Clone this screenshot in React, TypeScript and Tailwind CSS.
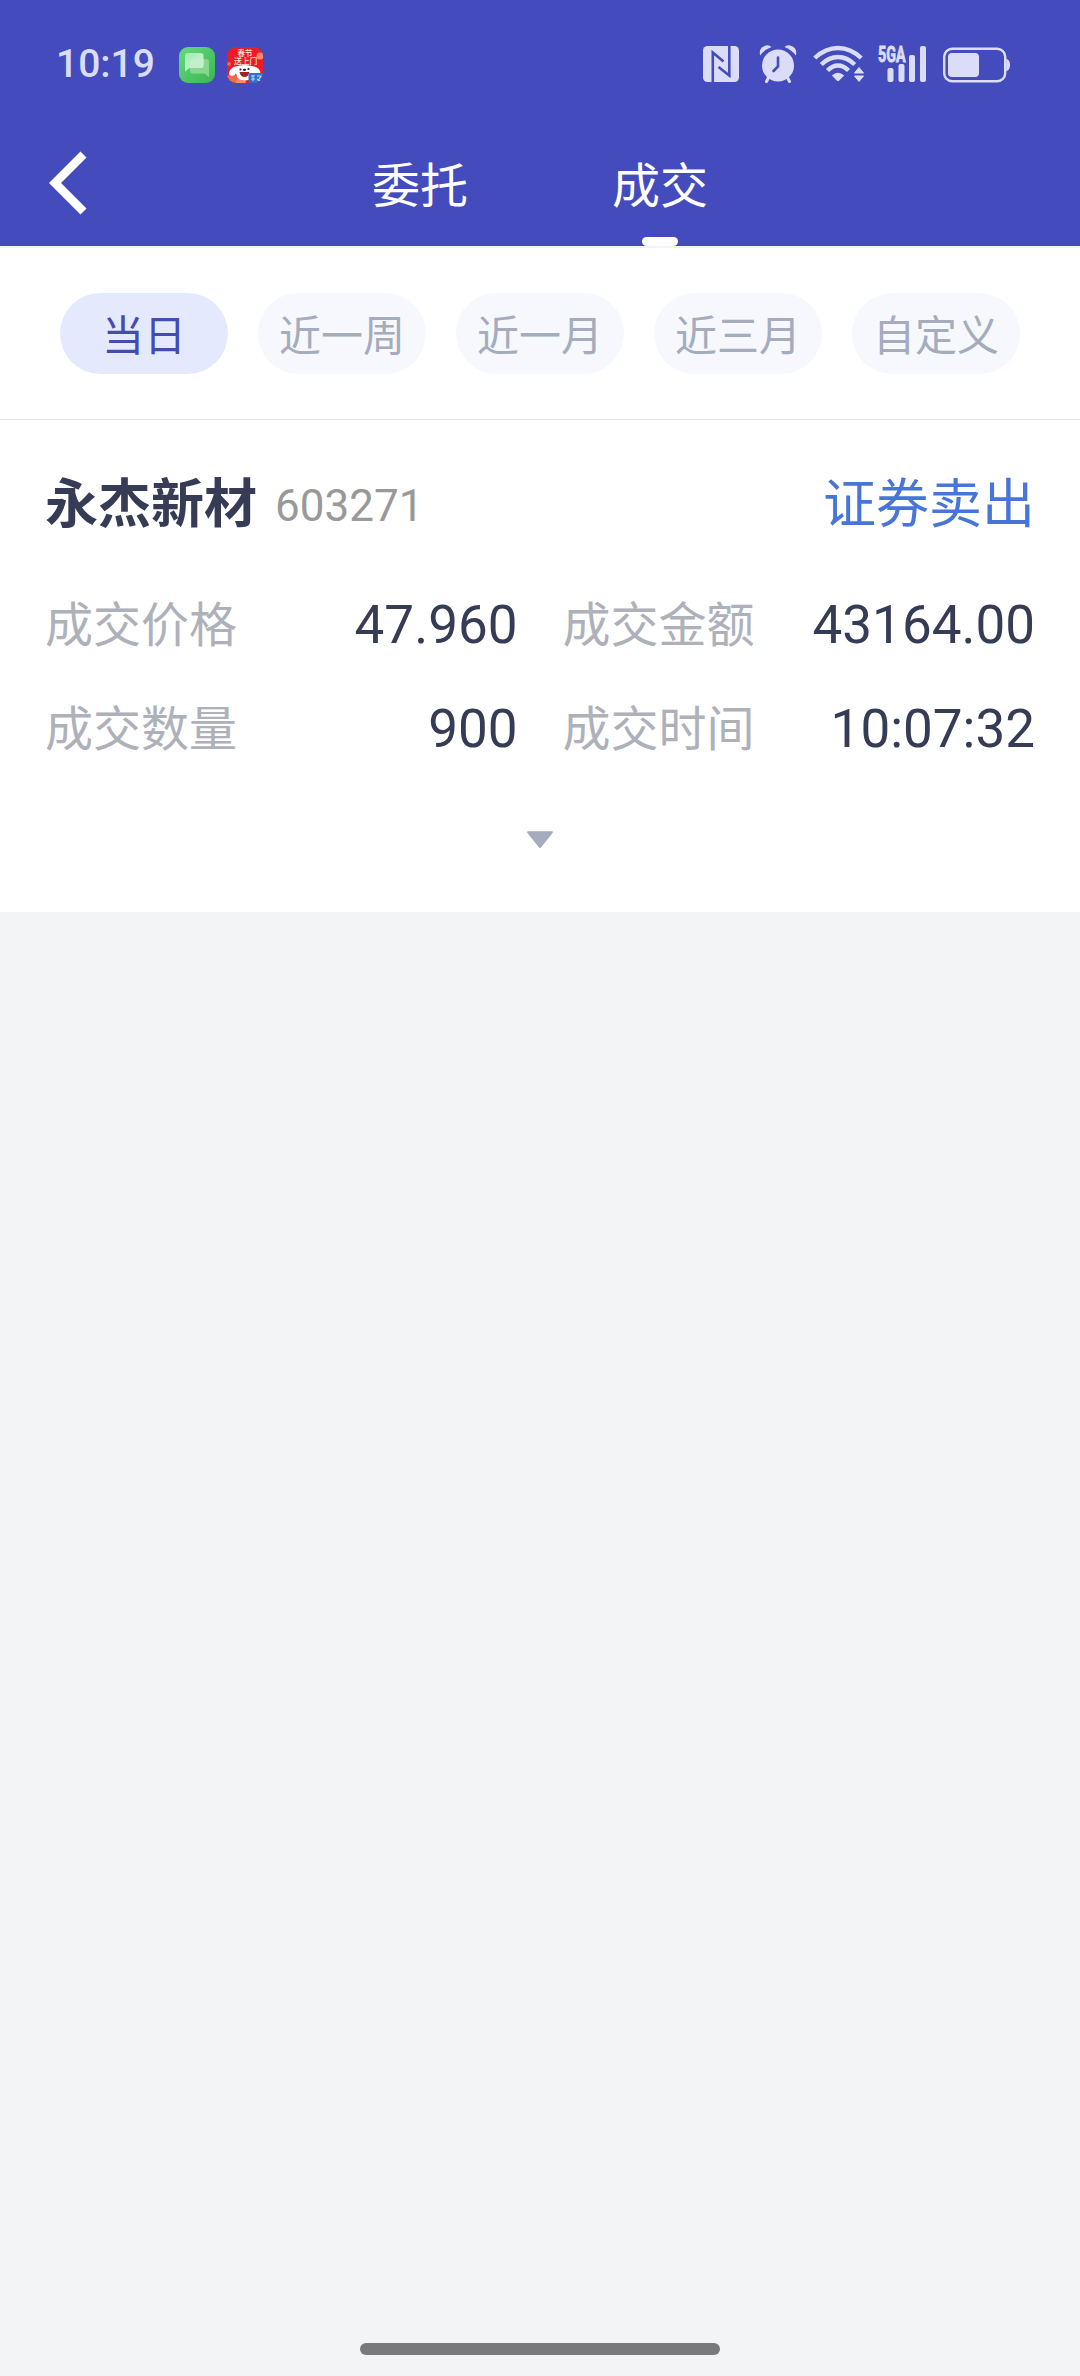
import React from "react";

const INK = "#DBDDF8";

function ChatAppIcon() {
  return (
    <svg width="36" height="36" viewBox="0 0 36 36">
      <defs>
        <linearGradient id="chatBg" x1="0" y1="0" x2="1" y2="1">
          <stop offset="0" stopColor="#62DB7F" />
          <stop offset="1" stopColor="#3DB551" />
        </linearGradient>
        <linearGradient id="bubble" x1="0" y1="0" x2="1" y2="1">
          <stop offset="0" stopColor="#A2EAB2" />
          <stop offset="1" stopColor="#D2F5D8" />
        </linearGradient>
      </defs>
      <rect width="36" height="36" rx="9" fill="url(#chatBg)" />
      <path d="M14 12h13q3 0 3 3v15l-4.500-3.500H14q-3 0-3-3V15q0-3 3-3z" fill="#85D88F" />
      <path d="M9 6h12.500q3 0 3 3v9q0 3-3 3H10.500L6 24.500V9q0-3 3-3z" fill="url(#bubble)" />
      <path d="M14 12h10.500v6q0 3-3 3H11.500V15q0-3 2.500-3z" fill="#C3EFCB" />
    </svg>
  );
}

function FestivalAppIcon() {
  return (
    <svg width="36" height="36" viewBox="0 0 36 36">
      <defs>
        <clipPath id="festClip">
          <rect width="36" height="36" rx="9" />
        </clipPath>
      </defs>
      <g clipPath="url(#festClip)">
        <rect width="36" height="36" fill="#EC1B24" />
        <circle cx="33" cy="9" r="3.500" fill="#F98A72" />
        <circle cx="2" cy="17" r="2" fill="#F5604F" />
        <circle cx="5" cy="34" r="7" fill="#F26A4A" />
        <circle cx="14" cy="36" r="5" fill="#F58B6D" />
        <g fill="#FFE9E2" fontFamily="'Noto Sans CJK SC', sans-serif" fontWeight="500">
          <text x="10.500" y="9" fontSize="7.500">春节</text>
          <text x="7" y="17.200" fontSize="7.800">送上门</text>
        </g>
        <path d="M8 19.500q10-3 19 0 6 1 7 8-5 3-7-1-1 7-9 7-8 0-9-7-3 4-7 1 0-6 6-8z" fill="#fff" />
        <circle cx="13.500" cy="22.500" r="1.100" fill="#222" />
        <circle cx="21.500" cy="22" r="1.100" fill="#222" />
        <ellipse cx="17.500" cy="22.800" rx="1.800" ry="1.100" fill="#222" />
        <path d="M12.500 25h10q-1 5-5 5t-5-5z" fill="#9C2228" />
        <rect x="21.500" y="26" width="15" height="10" rx="2" fill="#2E72D2" />
        <path d="M24 29h4M24 32h4M26 28v6M30 29h4l-3 5M30 32l3 2" stroke="#BBD8FA" strokeWidth="1.100" fill="none" />
      </g>
    </svg>
  );
}

function NfcIcon() {
  return (
    <svg width="36" height="36" viewBox="0 0 36 36">
      <rect width="36" height="36" rx="4.500" fill={INK} />
      <g fill="none" stroke="#444CBD" strokeWidth="2.600">
        <path d="M9.800 36V6.500L20.500 15.500" />
        <path d="M26.300 0V29.500L15.500 21" />
      </g>
    </svg>
  );
}

function AlarmIcon() {
  return (
    <svg width="38" height="38" viewBox="0 0 38 38">
      <g fill={INK}>
        <circle cx="19" cy="20.500" r="16" />
        <path d="M1.200 10.500Q-.5 4 4.500 1.500T12.500 2Q5.500 4.500 1.200 10.500z" />
        <path d="M36.800 10.500Q38.500 4 33.500 1.500T25.500 2Q32.500 4.500 36.800 10.500z" />
      </g>
      <path d="M9.500 32.500L7.500 36.500M28.500 32.500L30.500 36.500" stroke={INK} strokeWidth="3" strokeLinecap="round" />
      <path d="M19 12.500V21.500L14.500 26" fill="none" stroke="#444CBD" strokeWidth="2.600" strokeLinecap="round" />
    </svg>
  );
}

function WifiIcon() {
  return (
    <svg width="52" height="38" viewBox="0 0 52 38">
      <g fill="none" stroke={INK} strokeWidth="4.400">
        <path d="M1.800 13Q12.500 3 25 3T48.200 13" />
        <path d="M8.300 19.500Q16 12 25 12T41.700 19.500" />
        <path d="M14.500 25.500Q19.500 20.500 25 20.500T35.500 25.500" />
      </g>
      <path d="M18.800 30.500Q25 25 31.200 30.500L26 35.800Q25 36.700 24 35.800z" fill={INK} />
      <path d="M41.500 28L46 22.500 50.500 28zM41.500 31L46 36.500 50.500 31z" fill={INK} stroke={INK} strokeWidth="1" strokeLinejoin="round" />
    </svg>
  );
}

function SignalIcon() {
  return (
    <svg className="overflow-visible" width="50" height="38" viewBox="0 0 50 38">
      <text
        x="0"
        y="16.500"
        fill={INK}
        stroke={INK}
        strokeWidth="0.900"
        fontFamily="Roboto, sans-serif"
        fontWeight="700"
        fontSize="22.500"
        textLength="27.500"
        lengthAdjust="spacingAndGlyphs"
      >
        5GA
      </text>
      <g fill={INK}>
        <rect x="9.500" y="23" width="6" height="14" rx="2" />
        <rect x="20.500" y="19" width="6" height="18" rx="2" />
        <rect x="31" y="10" width="6" height="27" rx="2" />
        <rect x="42" y="1" width="6" height="36" rx="2" />
      </g>
    </svg>
  );
}

function BatteryIcon() {
  return (
    <svg width="68" height="36" viewBox="0 0 68 36">
      <rect x="1.200" y="1.700" width="61" height="32.600" rx="8" fill="none" stroke={INK} strokeWidth="2.400" />
      <rect x="5" y="6" width="31" height="24" rx="4" fill={INK} />
      <path d="M63.200 12h.8q3 1.500 3 6t-3 6h-.8z" fill={INK} />
    </svg>
  );
}

function StatusBar() {
  return (
    <div className="flex h-[122px] items-start justify-between pl-[56px] pr-[69px] pt-[45px]">
      <div className="flex h-10 items-center">
        <span className="w-[123px] pb-[2px] font-['Roboto'] text-[39px] font-medium leading-[38px] text-[#DBDDF8]">
          10:19
        </span>
        <span className="flex gap-3">
          <ChatAppIcon />
          <FestivalAppIcon />
        </span>
      </div>
      <div className="flex h-[38px] items-center">
        <NfcIcon />
        <span className="ml-5"><AlarmIcon /></span>
        <span className="ml-4"><WifiIcon /></span>
        <span className="ml-[13px]"><SignalIcon /></span>
        <span className="ml-[15px] pt-px"><BatteryIcon /></span>
      </div>
    </div>
  );
}

function Tab({ label, active }: { label: string; active?: boolean }) {
  return (
    <button className="relative flex w-[240px] items-center justify-center pb-[5px] text-[48px] leading-none text-white">
      <span>{label}</span>
      {active && <span className="absolute bottom-0 left-[102px] h-[9px] w-9 rounded-[4.5px] bg-white" />}
    </button>
  );
}

function NavBar() {
  return (
    <div className="flex h-[124px]">
      <button className="flex w-[300px] items-center pb-[2px] pl-[49px]" aria-label="back">
        <svg width="38" height="64" viewBox="0 0 38 64" fill="none">
          <path d="M34.500 3.500L6 32l28.500 28.500" stroke="#fff" strokeWidth="8.500" />
        </svg>
      </button>
      <Tab label="委托" />
      <Tab label="成交" active />
    </div>
  );
}

const RANGES = ["当日", "近一周", "近一月", "近三月", "自定义"];

function Filters() {
  return (
    <div className="flex h-[174px] gap-[30px] border-b border-[#E3E4E7] border-t-2 border-t-[#F3F4F6] px-[60px] pt-[45px]">
      {RANGES.map((r, i) => (
        <button
          key={r}
          className={`flex h-[81px] w-[168px] items-center justify-center rounded-full pb-[2px] text-[42px] leading-none ${
            i === 0 ? "bg-[#E5E9FE] text-[#444CAF]" : "bg-[#F6F8FD] text-[#A4ACBD]"
          }`}
        >
          {r}
        </button>
      ))}
    </div>
  );
}

function Field({ label, value }: { label: string; value: string }) {
  return (
    <div className="flex h-[104px] items-center justify-between">
      <span className="pb-[6px] text-[48px] leading-none text-[#AEB0BA]">{label}</span>
      <span className="pt-[2px] font-['Roboto'] text-[53px] leading-none text-[#363C55]">{value}</span>
    </div>
  );
}

function TradeCard() {
  return (
    <section className="h-[492px] bg-white px-[45px] pt-[42px]">
      <div className="flex h-20 items-center justify-between">
        <div className="flex items-center">
          <h2 className="pb-1 text-[53px] font-bold leading-none text-[#363C55]">永杰新材</h2>
          <span className="ml-[18px] pt-[8px] font-['Roboto'] text-[44px] leading-none text-[#999999]">603271</span>
        </div>
        <span className="pb-1 text-[53px] leading-none text-[#4876D8]">证券卖出</span>
      </div>
      <div className="mt-[30px] grid grid-cols-2 gap-x-[45px]">
        <Field label="成交价格" value="47.960" />
        <Field label="成交金额" value="43164.00" />
        <Field label="成交数量" value="900" />
        <Field label="成交时间" value="10:07:32" />
      </div>
      <div className="mt-[51px] flex justify-center">
        <svg width="28" height="18" viewBox="0 0 28 18">
          <path d="M2 1.200h24L14 16z" fill="#A4ACBD" stroke="#A4ACBD" strokeWidth="2" strokeLinejoin="round" />
        </svg>
      </div>
    </section>
  );
}

export default function App() {
  return (
    <div className="flex h-[2376px] w-[1080px] flex-col bg-[#F3F4F6] font-['Noto_Sans_CJK_SC',sans-serif]">
      <header className="bg-[#444CBD]">
        <StatusBar />
        <NavBar />
      </header>
      <div className="bg-white">
        <Filters />
      </div>
      <TradeCard />
      <div className="mt-auto flex justify-center pb-[21px]">
        <div className="h-3 w-[360px] rounded-full bg-[#7A7A7A]" />
      </div>
    </div>
  );
}
